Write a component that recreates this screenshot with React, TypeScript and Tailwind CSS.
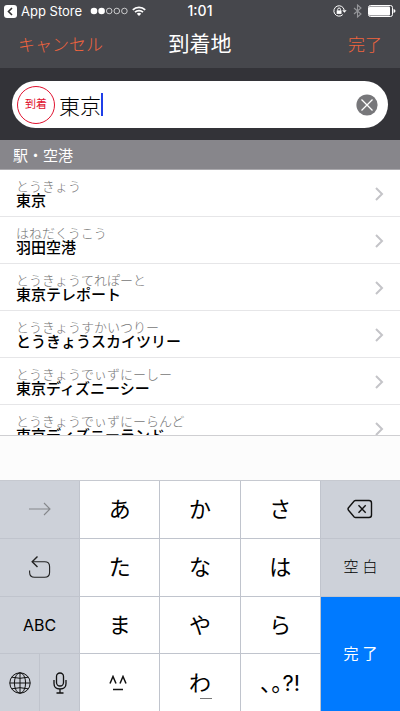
import React, { useState } from "react";

const stations = [
  { kana: "とうきょう", name: "東京" },
  { kana: "はねだくうこう", name: "羽田空港" },
  { kana: "とうきょうてれぽーと", name: "東京テレポート" },
  { kana: "とうきょうすかいつりー", name: "とうきょうスカイツリー" },
  { kana: "とうきょうでぃずにーしー", name: "東京ディズニーシー" },
  { kana: "とうきょうでぃずにーらんど", name: "東京ディズニーランド" },
];

function StatusBar() {
  return (
    <div className="grid h-5 grid-cols-[1fr_auto_1fr] items-center px-1 pt-0.5 text-[13px] leading-4 text-white">
      <div className="flex items-center">
        <svg width="13" height="13" viewBox="0 0 13 13" aria-hidden="true">
          <rect width="13" height="13" rx="3" fill="#fff" />
          <path d="M8 3 4.5 6.5 8 10" fill="none" stroke="#333" strokeWidth="1.6" />
        </svg>
        <span className="ml-1">App Store</span>
        <svg className="ml-2" width="38" height="8" viewBox="0 0 38 8" aria-hidden="true">
          <circle cx="4" cy="4" r="3.3" fill="#fff" />
          <circle cx="11.6" cy="4" r="3.3" fill="#fff" />
          <g fill="none" stroke="#fff" strokeWidth="0.7">
            <circle cx="19.2" cy="4" r="2.8" />
            <circle cx="26.8" cy="4" r="2.8" />
            <circle cx="34.4" cy="4" r="2.8" />
          </g>
        </svg>
        <svg className="ml-1" width="14" height="10" viewBox="0 0 14 10" aria-hidden="true">
          <g fill="none" stroke="#fff" strokeWidth="1.7">
            <path d="M.8 3.9a8.8 8.8 0 0 1 12.4 0" />
            <path d="M3 6.2a5.7 5.7 0 0 1 8 0" />
          </g>
          <path d="M4.8 7.8a3.1 3.1 0 0 1 4.4 0L7 10Z" fill="#fff" />
        </svg>
      </div>
      <span className="text-sm leading-4 font-medium">1:01</span>
      <div className="flex items-center justify-end">
        <svg width="14" height="12" viewBox="0 0 14 12" aria-hidden="true">
          <path d="M9.800 9.600A5.200 5.200 0 1 1 11.200 5" fill="none" stroke="#fff" strokeWidth="1" />
          <path d="M9.2 5.200h4.400l-2.200 2.600Z" fill="#fff" />
          <rect x="3.700" y="5.400" width="4.800" height="3.500" fill="#fff" />
          <path d="M4.700 5.600V4.400a1.400 1.400 0 0 1 2.800 0v1.200" fill="none" stroke="#fff" strokeWidth="1" />
        </svg>
        <svg className="ml-1.5" width="9" height="14" viewBox="0 0 9 14" aria-hidden="true">
          <path d="M1 4l7 6-3.500 3V1L8 4l-7 6" fill="none" stroke="#96979b" strokeWidth="1.1" />
        </svg>
        <svg className="ml-1.5" width="28" height="12" viewBox="0 0 28 12" aria-hidden="true">
          <rect x=".5" y=".5" width="24" height="11" rx="2" fill="none" stroke="#fff" />
          <rect x="1" y="1.5" width="21" height="9" rx="1" fill="#fff" />
          <path d="M25.5 4v4q2-.5 2-2t-2-2Z" fill="#fff" />
        </svg>
      </div>
    </div>
  );
}

function CharKey({ label }: { label: string }) {
  return (
    <button type="button" className="bg-white text-[22px]">
      {label}
    </button>
  );
}

function Keyboard() {
  const side = "flex items-center justify-center bg-[#cdd1d9]";
  return (
    <div className="grid h-[231px] shrink-0 grid-cols-5 grid-rows-4 gap-px border-t border-[#c6c9d0] bg-[#c0c4cd] leading-8 text-black">
      <button type="button" className={side} aria-label="次候補">
        <svg width="22" height="14" viewBox="0 0 22 14" fill="none" stroke="#85878b" strokeWidth="1.1">
          <path d="M0 7h21M15 1l6 6-6 6" />
        </svg>
      </button>
      <CharKey label="あ" />
      <CharKey label="か" />
      <CharKey label="さ" />
      <button type="button" className={side} aria-label="削除">
        <svg width="26" height="20" viewBox="0 0 26 20" fill="none" stroke="#111" strokeWidth="1.4">
          <path d="M8.6 1.5H22a2.5 2.5 0 0 1 2.5 2.5v12a2.5 2.5 0 0 1-2.5 2.5H8.6q-.8 0-1.4-.6L1.5 11.2q-1-1.2 0-2.4L7.2 2.1q.6-.6 1.4-.6ZM11.500 6.300l7.2 7.4M18.700 6.300l-7.2 7.4" />
        </svg>
      </button>

      <button type="button" className={side} aria-label="逆順">
        <svg width="22" height="24" viewBox="0 0 22 24" fill="none" stroke="#222" strokeWidth="1.1">
          <path d="M.6 15.5v1.8q0 5 5 5h10q5 0 5-5v-5.600q0-5-5-5H3.500" />
          <path d="M8.500 1.500 3.200 6.700l5.300 5.200" strokeWidth="1.4" />
        </svg>
      </button>
      <CharKey label="た" />
      <CharKey label="な" />
      <CharKey label="は" />
      <button type="button" className={`${side} gap-1 text-[15px] font-light`}>
        <span>空</span>
        <span>白</span>
      </button>

      <button type="button" className={`${side} text-base`}>ABC</button>
      <CharKey label="ま" />
      <CharKey label="や" />
      <CharKey label="ら" />
      <button type="button" className="row-span-2 flex items-center justify-center gap-1 bg-[#007aff] text-[15px] text-white">
        <span>完</span>
        <span>了</span>
      </button>

      <div className="grid grid-cols-2 gap-px">
        <button type="button" className={side} aria-label="キーボード切替">
          <svg width="22" height="22" viewBox="0 0 22 22" fill="none" stroke="#111" strokeWidth="1">
            <circle cx="11" cy="11" r="10.2" />
            <ellipse cx="11" cy="11" rx="5.600" ry="10.2" />
            <path d="M11 .8v20.400M.8 11h20.400M2.800 5.200q8.200 2.200 16.400 0M2.800 16.800q8.200-2.200 16.400 0" />
          </svg>
        </button>
        <button type="button" className={side} aria-label="音声入力">
          <svg width="14" height="22" viewBox="0 0 14 22" fill="none" stroke="#111" strokeWidth="1.3">
            <rect x="3.500" y="1" width="7" height="13" rx="3.500" />
            <path d="M1 8v3.500q0 5.500 6 5.500t6-5.500V8M7 17v4M3.500 21h7" />
          </svg>
        </button>
      </div>
      <button type="button" className="flex items-center justify-center bg-white pr-1" aria-label="顔文字">
        <svg width="18" height="16" viewBox="0 0 18 16" fill="none" stroke="#111" strokeWidth="1.5">
          <path d="M1 8.500 4 1.500l3 7M11 8.500l3-7 3 7M4 14.500h10" />
        </svg>
      </button>
      <button type="button" className="relative bg-white text-[22px]">
        わ
        <span className="absolute bottom-3 left-1/2 h-px w-3 bg-[#777]" />
      </button>
      <CharKey label="､｡?!" />
    </div>
  );
}

export default function App() {
  const [query, setQuery] = useState("東京");
  return (
    <div className="flex h-screen flex-col overflow-hidden bg-white font-['Inter','Noto_Sans_CJK_JP',sans-serif]">
      <header className="shrink-0 bg-[#46474c]">
        <StatusBar />
        <div className="grid h-12 grid-cols-[1fr_auto_1fr] items-center px-[18px]">
          <button type="button" className="justify-self-start pt-1 text-[17px] font-light text-[#f0643e]">キャンセル</button>
          <h1 className="text-[21px] text-white">到着地</h1>
          <button type="button" className="justify-self-end pt-1 text-[17px] font-light text-[#f0643e]">完了</button>
        </div>
      </header>

      <div className="h-18 shrink-0 bg-[#333338] px-3 pt-[13px]">
        <div className="flex h-[47px] items-center rounded-full bg-white pr-[10px] pl-[5px]">
          <label
            htmlFor="destination"
            className="flex size-[38px] shrink-0 items-center justify-center rounded-full border border-[#e0122f] text-[11px] text-[#e0122f]"
          >
            到着
          </label>
          <input
            id="destination"
            type="text"
            value={query}
            onChange={(e) => setQuery(e.target.value)}
            className="ml-1 h-8 field-sizing-content text-[21px] font-light text-black outline-none"
          />
          <span className="h-[23px] w-0.5 bg-[#1f3fe8]" />
          <button type="button" aria-label="消去" className="ml-auto" onClick={() => setQuery("")}>
            <svg width="22" height="22" viewBox="0 0 22 22">
              <circle cx="11" cy="11" r="10.600" fill="#77777a" />
              <path d="m5.500 5.500 11 11M16.500 5.500l-11 11" stroke="#fff" strokeWidth="1.3" />
            </svg>
          </button>
        </div>
      </div>

      <h2 className="flex h-[30px] shrink-0 items-center border-b border-[#aaa9ad] bg-[#87868b] px-[13px] pt-1 text-[15px] text-white">
        駅・空港
      </h2>

      <ul className="min-h-0 flex-1 overflow-hidden">
        {stations.map((s) => (
          <li key={s.kana} className="border-b border-[#e6e6e8]">
            <a href="#" className="flex h-[47px] items-center justify-between px-4 -mb-px">
              <span className="flex flex-col">
                <span className="text-[13px] leading-[14px] font-light text-[#777]">{s.kana}</span>
                <span className="text-[15px] leading-[15px] font-medium text-black">{s.name}</span>
              </span>
              <svg width="9" height="14" viewBox="0 0 9 14" fill="none" stroke="#c4c4c8" strokeWidth="2" aria-hidden="true">
                <path d="m1 1 6 6-6 6" />
              </svg>
            </a>
          </li>
        ))}
      </ul>

      <div className="h-[45px] shrink-0 border-t border-[#cfcfd2] bg-[#fcfcfc]" />
      <Keyboard />
    </div>
  );
}
